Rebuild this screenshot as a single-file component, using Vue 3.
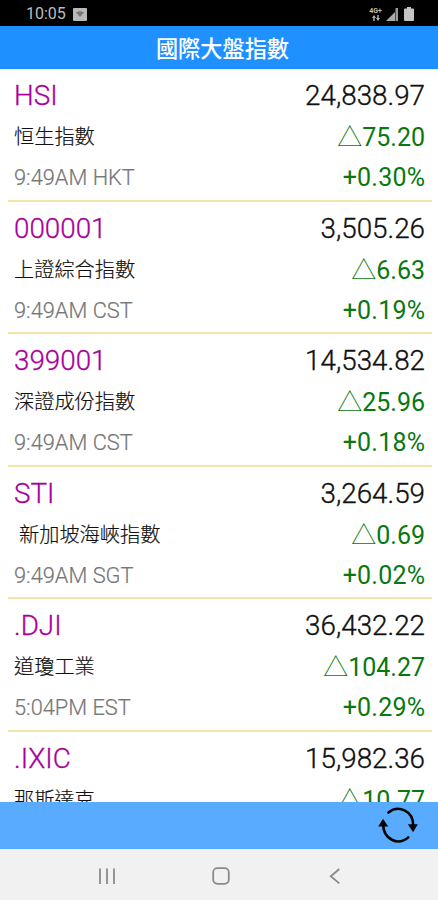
<template>
  <div class="screen">
    <header class="status-bar">
      <span class="clock">10:05</span>
      <svg class="photo-icon" viewBox="0 0 14 13" aria-hidden="true">
        <rect width="14" height="13" rx="1" fill="#b9b9b9" />
        <path d="M3 4.5Q7 1.8 11 4.5L7 9Z" fill="#777" />
      </svg>
      <div class="status-right">
        <div class="network">
          <span>4G+</span>
          <svg viewBox="0 0 10 6" aria-hidden="true">
            <path d="M3 0L5 3H1ZM2.3 3H3.7V6H2.3ZM7 6L5 3H9ZM6.3 0H7.7V3H6.3Z" fill="#b5b5b5" />
          </svg>
        </div>
        <svg class="signal-icon" viewBox="0 0 12 13" aria-hidden="true">
          <path d="M0 13L9 4V13Z" fill="#aaa" />
          <path d="M9.5 0H12V13H9.5Z" fill="#999" />
        </svg>
        <svg class="battery-icon" viewBox="0 0 10 14" aria-hidden="true">
          <path d="M3 0H7V1.5H9Q10 1.5 10 2.5V13Q10 14 9 14H1Q0 14 0 13V2.5Q0 1.5 1 1.5H3Z" fill="#c4c4c4" />
        </svg>
      </div>
    </header>

    <h1 class="title">國際大盤指數</h1>

    <main class="quotes">
      <article v-for="item in quotes" :key="item.symbol" class="quote">
        <div class="line line-main">
          <span class="symbol">{{ item.symbol }}</span>
          <span class="price">{{ item.price }}</span>
        </div>
        <div class="line line-change">
          <span class="name" :class="{ indented: item.indented }">{{ item.name }}</span>
          <span class="gain"><span class="triangle">△</span>{{ item.change }}</span>
        </div>
        <div class="line line-time">
          <span class="time">{{ item.time }}</span>
          <span class="gain percent">{{ item.percent }}</span>
        </div>
      </article>
    </main>

    <footer class="toolbar">
      <button class="refresh" type="button" aria-label="重新整理" @click="refresh">
        <svg viewBox="0 0 40 36" aria-hidden="true">
          <g fill="none" stroke="#050505" stroke-width="2.6" stroke-linecap="round">
            <path d="M10.5 5.5C20 -2.5 35.5 3.5 35.2 19" />
            <path d="M30.2 30.4C20 39.5 5 32 5.2 17" />
          </g>
          <path d="M29.8 17.3H39.8L35.1 25.2Z" fill="#050505" />
          <path d="M0.2 19.4H10.2L5 11.8Z" fill="#050505" />
        </svg>
      </button>
    </footer>

    <nav class="system-nav">
      <svg viewBox="0 0 18 18" aria-hidden="true">
        <path d="M2 1.5V17M9 1.5V17M16 1.5V17" />
      </svg>
      <svg viewBox="0 0 18 18" aria-hidden="true">
        <rect x="1.2" y="1.2" width="15.6" height="15.6" rx="4.2" />
      </svg>
      <svg viewBox="0 0 18 18" aria-hidden="true">
        <path d="M13.3 2L4.8 9.2L13.3 16.4" />
      </svg>
    </nav>
  </div>
</template>

<script setup>
import { ref } from 'vue';

const quotes = ref([
  { symbol: 'HSI', name: '恒生指數', time: '9:49AM HKT', price: '24,838.97', change: '75.20', percent: '+0.30%' },
  { symbol: '000001', name: '上證綜合指數', time: '9:49AM CST', price: '3,505.26', change: '6.63', percent: '+0.19%' },
  { symbol: '399001', name: '深證成份指數', time: '9:49AM CST', price: '14,534.82', change: '25.96', percent: '+0.18%' },
  { symbol: 'STI', name: '新加坡海峽指數', time: '9:49AM SGT', price: '3,264.59', change: '0.69', percent: '+0.02%', indented: true },
  { symbol: '.DJI', name: '道瓊工業', time: '5:04PM EST', price: '36,432.22', change: '104.27', percent: '+0.29%' },
  { symbol: '.IXIC', name: '那斯達克', time: '5:15PM EST', price: '15,982.36', change: '10.77', percent: '+0.07%' }
]);

function refresh() {
  quotes.value = [...quotes.value];
}
</script>

<style>
body {
  margin: 0;
}
</style>

<style scoped>
.screen {
  display: flex;
  flex-direction: column;
  width: 100%;
  height: 900px;
  overflow: hidden;
  background: #fff;
  font-family: Roboto, "Noto Sans CJK TC", sans-serif;
}

.status-bar {
  flex: none;
  display: flex;
  align-items: center;
  box-sizing: border-box;
  height: 26px;
  padding: 2px 24px 0 26px;
  background: #000;
  color: #bdbdbd;
}

.clock {
  width: 47px;
  font-size: 16px;
  line-height: 24px;
}

.photo-icon {
  width: 14px;
  height: 13px;
}

.status-right {
  display: flex;
  align-items: center;
  margin-left: auto;
}

.network {
  display: flex;
  flex-direction: column;
  align-items: center;
  width: 13px;
  margin-right: 4px;
  font-size: 7px;
  font-weight: 700;
  line-height: 7px;
}

.network svg {
  width: 10px;
  height: 6px;
}

.signal-icon {
  width: 12px;
  height: 13px;
  margin-right: 6px;
}

.battery-icon {
  width: 10px;
  height: 14px;
}

.title {
  flex: none;
  height: 43px;
  margin: 0;
  padding-left: 7px;
  background: #1e90ff;
  color: #fff;
  font-size: 22.2px;
  font-weight: 500;
  line-height: 46px;
  text-align: center;
}

.quotes {
  flex: 1;
  min-height: 0;
  overflow: hidden;
}

.quote {
  box-sizing: border-box;
  height: 132.5px;
  margin: 0 6px 0 8px;
  padding: 6px 7px 0 6px;
  border-bottom: 2px solid #f2e6a4;
}

.line {
  display: flex;
  align-items: center;
  justify-content: space-between;
  white-space: nowrap;
}

.line-main {
  height: 41px;
  font-size: 27.8px;
  line-height: 41px;
}

.line-change {
  height: 41px;
  font-size: 25px;
  line-height: 41px;
}

.line-time {
  height: 41px;
  font-size: 25px;
  line-height: 41px;
}

.symbol {
  color: #a8009a;
  font-weight: 300;
  -webkit-text-stroke: 0.3px currentColor;
}

.price {
  color: #111;
  font-weight: 300;
  -webkit-text-stroke: 0.35px currentColor;
}

.name {
  padding-top: 2px;
  color: #111;
  font-size: 20.2px;
  font-weight: 300;
  -webkit-text-stroke: 0.2px currentColor;
}

.name.indented {
  padding-left: 5px;
}

.gain {
  color: #08780f;
}

.percent {
  letter-spacing: 0.2px;
  margin-right: -0.2px;
}

.triangle {
  font-family: "Noto Sans CJK TC", sans-serif;
  font-weight: 300;
}

.time {
  color: #777;
  font-size: 21.8px;
  font-weight: 300;
  -webkit-text-stroke: 0.2px currentColor;
}

.toolbar {
  flex: none;
  display: flex;
  align-items: center;
  justify-content: flex-end;
  height: 47.5px;
  padding-right: 20px;
  background: #59abff;
}

.refresh {
  width: 40px;
  height: 36px;
  padding: 0;
  border: 0;
  background: transparent;
}

.refresh svg {
  display: block;
  width: 40px;
  height: 36px;
}

.system-nav {
  flex: none;
  display: flex;
  align-items: center;
  justify-content: center;
  gap: 96px;
  box-sizing: border-box;
  height: 51px;
  padding: 2px 0 0 4px;
  background: #f1f1f1;
}

.system-nav svg {
  width: 18px;
  height: 18px;
  fill: none;
  stroke: #8b8b8b;
  stroke-width: 1.8;
}
</style>
